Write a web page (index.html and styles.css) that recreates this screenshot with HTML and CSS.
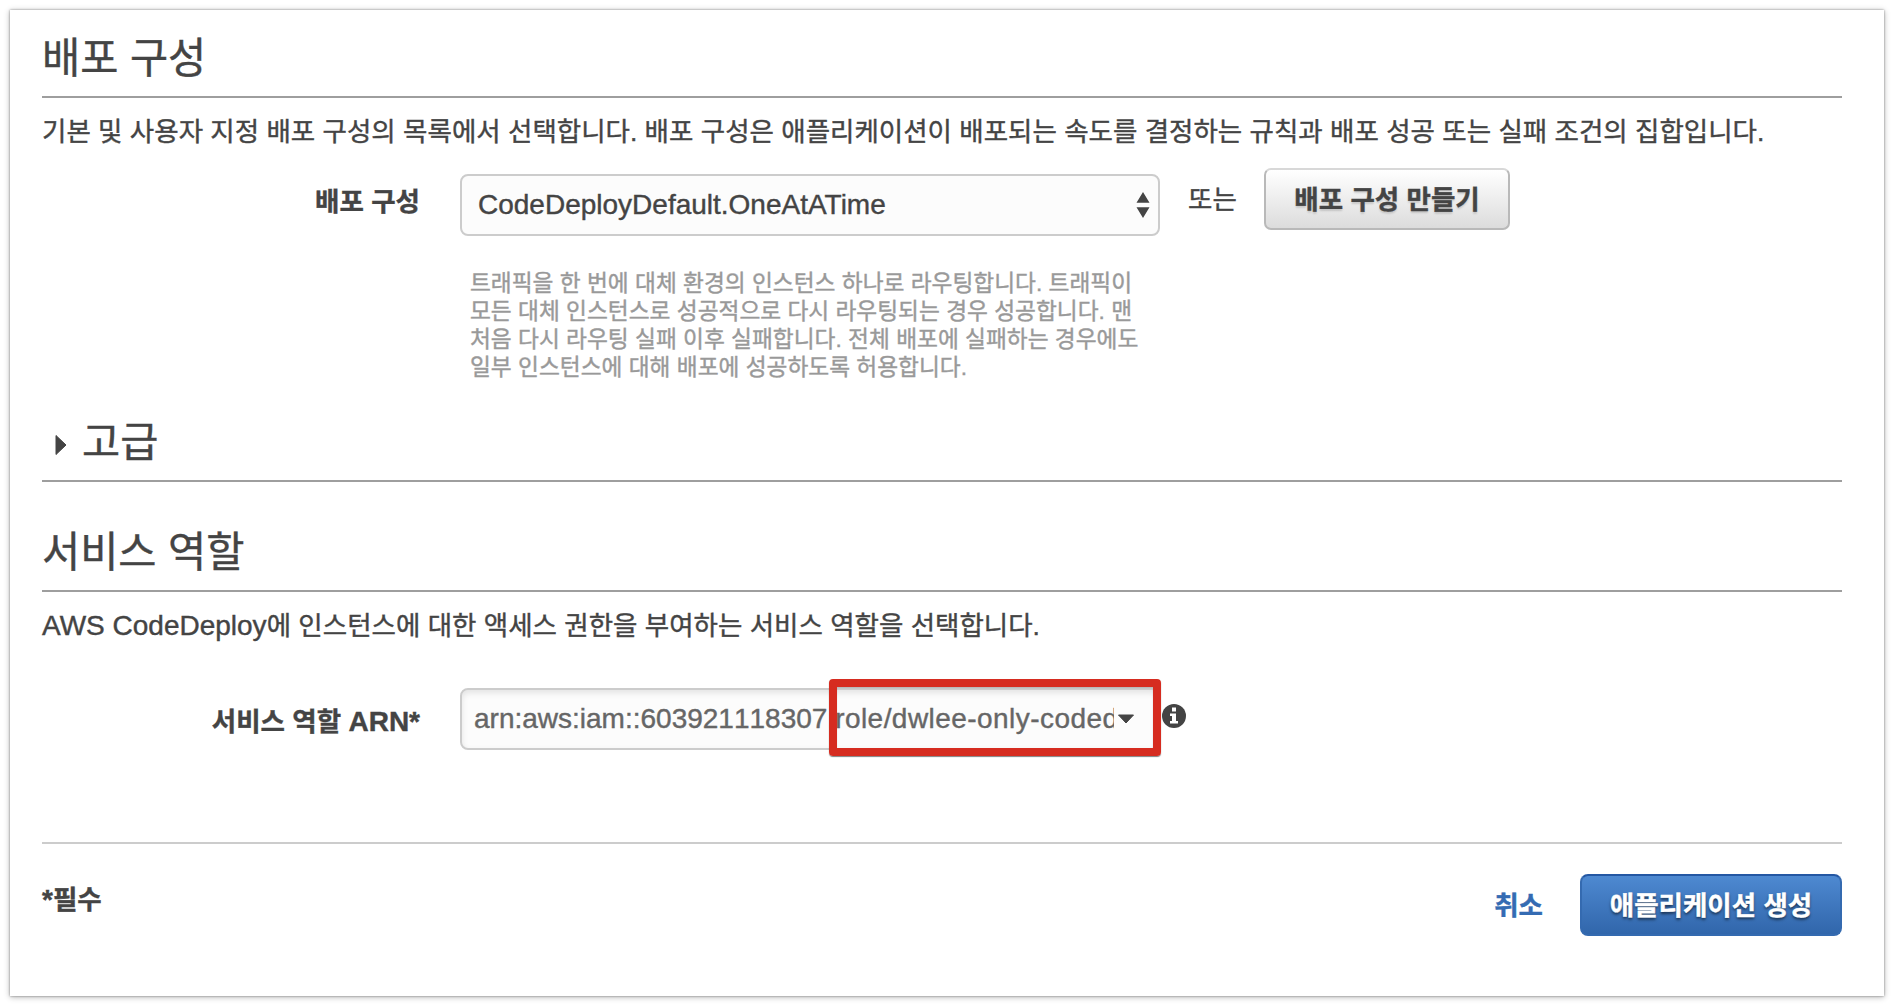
FILE: index.html
```html
<!DOCTYPE html>
<html lang="ko">
<head>
<meta charset="utf-8">
<title>배포 구성</title>
<link rel="stylesheet" href="styles.css">
</head>
<body>
<main class="panel">
  <section class="deploy">
    <h2 class="heading">배포 구성</h2>
    <p class="intro">기본 및 사용자 지정 배포 구성의 목록에서 선택합니다. 배포 구성은 애플리케이션이 배포되는 속도를 결정하는 규칙과 배포 성공 또는 실패 조건의 집합입니다.</p>
    <div class="row">
      <label class="label">배포 구성</label>
      <div class="select"><span class="select-text">CodeDeployDefault.OneAtATime</span>
        <svg class="updown" width="14" height="26" viewBox="0 0 14 26"><path d="M7 0 13.500 10.800H.5ZM7 26 13.500 15.200H.5Z" fill="#444"/></svg>
      </div>
      <span class="or">또는</span>
      <button class="btn">배포 구성 만들기</button>
    </div>
    <p class="help">트래픽을 한 번에 대체 환경의 인스턴스 하나로 라우팅합니다. 트래픽이<br>모든 대체 인스턴스로 성공적으로 다시 라우팅되는 경우 성공합니다. 맨<br>처음 다시 라우팅 실패 이후 실패합니다. 전체 배포에 실패하는 경우에도<br>일부 인스턴스에 대해 배포에 성공하도록 허용합니다.</p>
  </section>
  <section class="advanced">
    <svg class="caret-right" width="12" height="22" viewBox="0 0 12 22"><path d="M1 1.500 11 11 1 20.500Z" fill="#444" stroke="#444" stroke-linejoin="round"/></svg>
    <h2 class="heading-adv">고급</h2>
  </section>
  <section class="role">
    <h2 class="heading heading-role">서비스 역할</h2>
    <p class="intro"><span class="latin">AWS CodeDeploy</span>에 인스턴스에 대한 액세스 권한을 부여하는 서비스 역할을 선택합니다.</p>
    <div class="row row-role">
      <label class="label">서비스 역할 <span class="latin">ARN*</span></label>
      <div class="combo">
        <span class="combo-text">arn:aws:iam::603921118307:<span class="role-name">role/dwlee-only-coded</span></span>
        <svg class="caret-down" width="18" height="10" viewBox="0 0 18 10"><path d="M1.500 1H16.500L9 9Z" fill="#444" stroke="#444" stroke-linejoin="round"/></svg>
        <span class="mark"></span>
      </div>
      <svg class="info" width="24" height="24" viewBox="0 0 24 24"><circle cx="12" cy="12" r="12" fill="#444"/><path d="M10 3.500h4v4h-4ZM8 9.500h6v7.500h2v2.500H8V17h2v-5H8Z" fill="#fff"/></svg>
    </div>
  </section>
  <footer class="footer">
    <span class="required"><span class="latin">*</span>필수</span>
    <a class="cancel">취소</a>
    <button class="btn btn-primary">애플리케이션 생성</button>
  </footer>
</main>
</body>
</html>
```
FILE: styles.css
```css
* { box-sizing: border-box; }
body {
  margin: 0;
  padding: 10px;
  height: 1006px;
  overflow: hidden;
  background: #fff;
  color: #444;
  font: 26.5px/36px "Liberation Sans", "Noto Sans CJK KR", sans-serif;
  -webkit-text-stroke: .4px;
  white-space: nowrap;
}
h2, p { margin: 0; font-weight: 400; }
.latin { font-size: 28px; line-height: 1; }
.panel {
  height: 986px;
  padding: 0 42px 0 32px;
  background: #fff;
  box-shadow: 0 0 2px rgba(0,0,0,.4), 0 1px 6px rgba(0,0,0,.3);
}
.heading {
  height: 88px;
  padding-top: 24px;
  border-bottom: 2px solid #9e9e9e;
  font-size: 41.5px;
  line-height: 50px;
}
.intro { height: 52px; padding-top: 16px; }
.row { display: flex; align-items: flex-start; }
.deploy { height: 396px; }
.deploy .row { height: 64px; margin-top: 18px; }
.label {
  width: 378px;
  height: 52px;
  font-weight: 700;
  text-align: right;
  padding-top: 16px;
}
.select {
  display: flex;
  align-items: center;
  justify-content: space-between;
  width: 700px;
  height: 62px;
  margin: 6px 0 0 40px;
  padding: 0 8px 0 16px;
  border: 2px solid #ccc;
  border-radius: 8px;
  background: #fcfcfc;
}
.select-text { font-size: 28px; }
.or { margin-left: 28px; width: 76px; padding-top: 14px; }
.btn {
  width: 246px;
  height: 62px;
  padding: 2px 0 0;
  border: 2px solid #b9b9b9;
  border-top-color: #d8d8d8;
  border-radius: 7px;
  background: linear-gradient(#fff, #dcdcdc);
  color: #444;
  font: inherit;
  font-weight: 700;
  text-shadow: 0 2px 2px rgba(0,0,0,.15);
}
.help {
  padding: 37px 0 0 428px;
  color: #999;
  font-size: 22.7px;
  line-height: 28px;
}
.advanced {
  display: flex;
  height: 76px;
  align-items: center;
  gap: 15px;
  padding-left: 13px;
  border-bottom: 2px solid #9e9e9e;
}
.caret-right { margin-top: 4px; }
.heading-adv { font-size: 41.5px; line-height: 50px; }
.role { height: 360px; }
.heading-role { height: 110px; padding-top: 46px; }
.row-role { margin-top: 44px; }
.combo {
  position: relative;
  display: flex;
  align-items: center;
  width: 700px;
  height: 62px;
  margin-left: 40px;
  padding-left: 12px;
  border: 2px solid #ccc;
  border-radius: 8px;
  background: #fcfcfc;
  box-shadow: inset 0 3px 6px rgba(0,0,0,.1);
  color: #666;
}
.combo-text { width: 640px; overflow: hidden; font-size: 28px; font-kerning: none; }
.role-name { letter-spacing: .45px; }
.caret-down { margin-left: 3px; }
.mark {
  position: absolute;
  left: 367px;
  top: -11px;
  width: 332px;
  height: 77px;
  border: 8px solid #d62c20;
  border-radius: 4px;
  box-shadow: 0 1px 1px rgba(0,0,0,.5), inset 0 1px 1px rgba(0,0,0,.3);
}
.info { margin: 16px 0 0 2px; }
.footer {
  display: flex;
  align-items: flex-start;
  padding-top: 30px;
  border-top: 2px solid #ccc;
  font-weight: 700;
}
.required { margin-top: 8px; flex: 1; }
.cancel { margin: 14px 37px 0 0; color: #346bb3; }
.btn-primary {
  width: 262px;
  border: 2px solid #346ab0;
  border-top-color: #2457a3;
  border-radius: 8px;
  background: linear-gradient(#4e89d1, #3166ab);
  color: #fff;
  text-shadow: 0 2px 3px rgba(0,0,0,.6);
}
```
